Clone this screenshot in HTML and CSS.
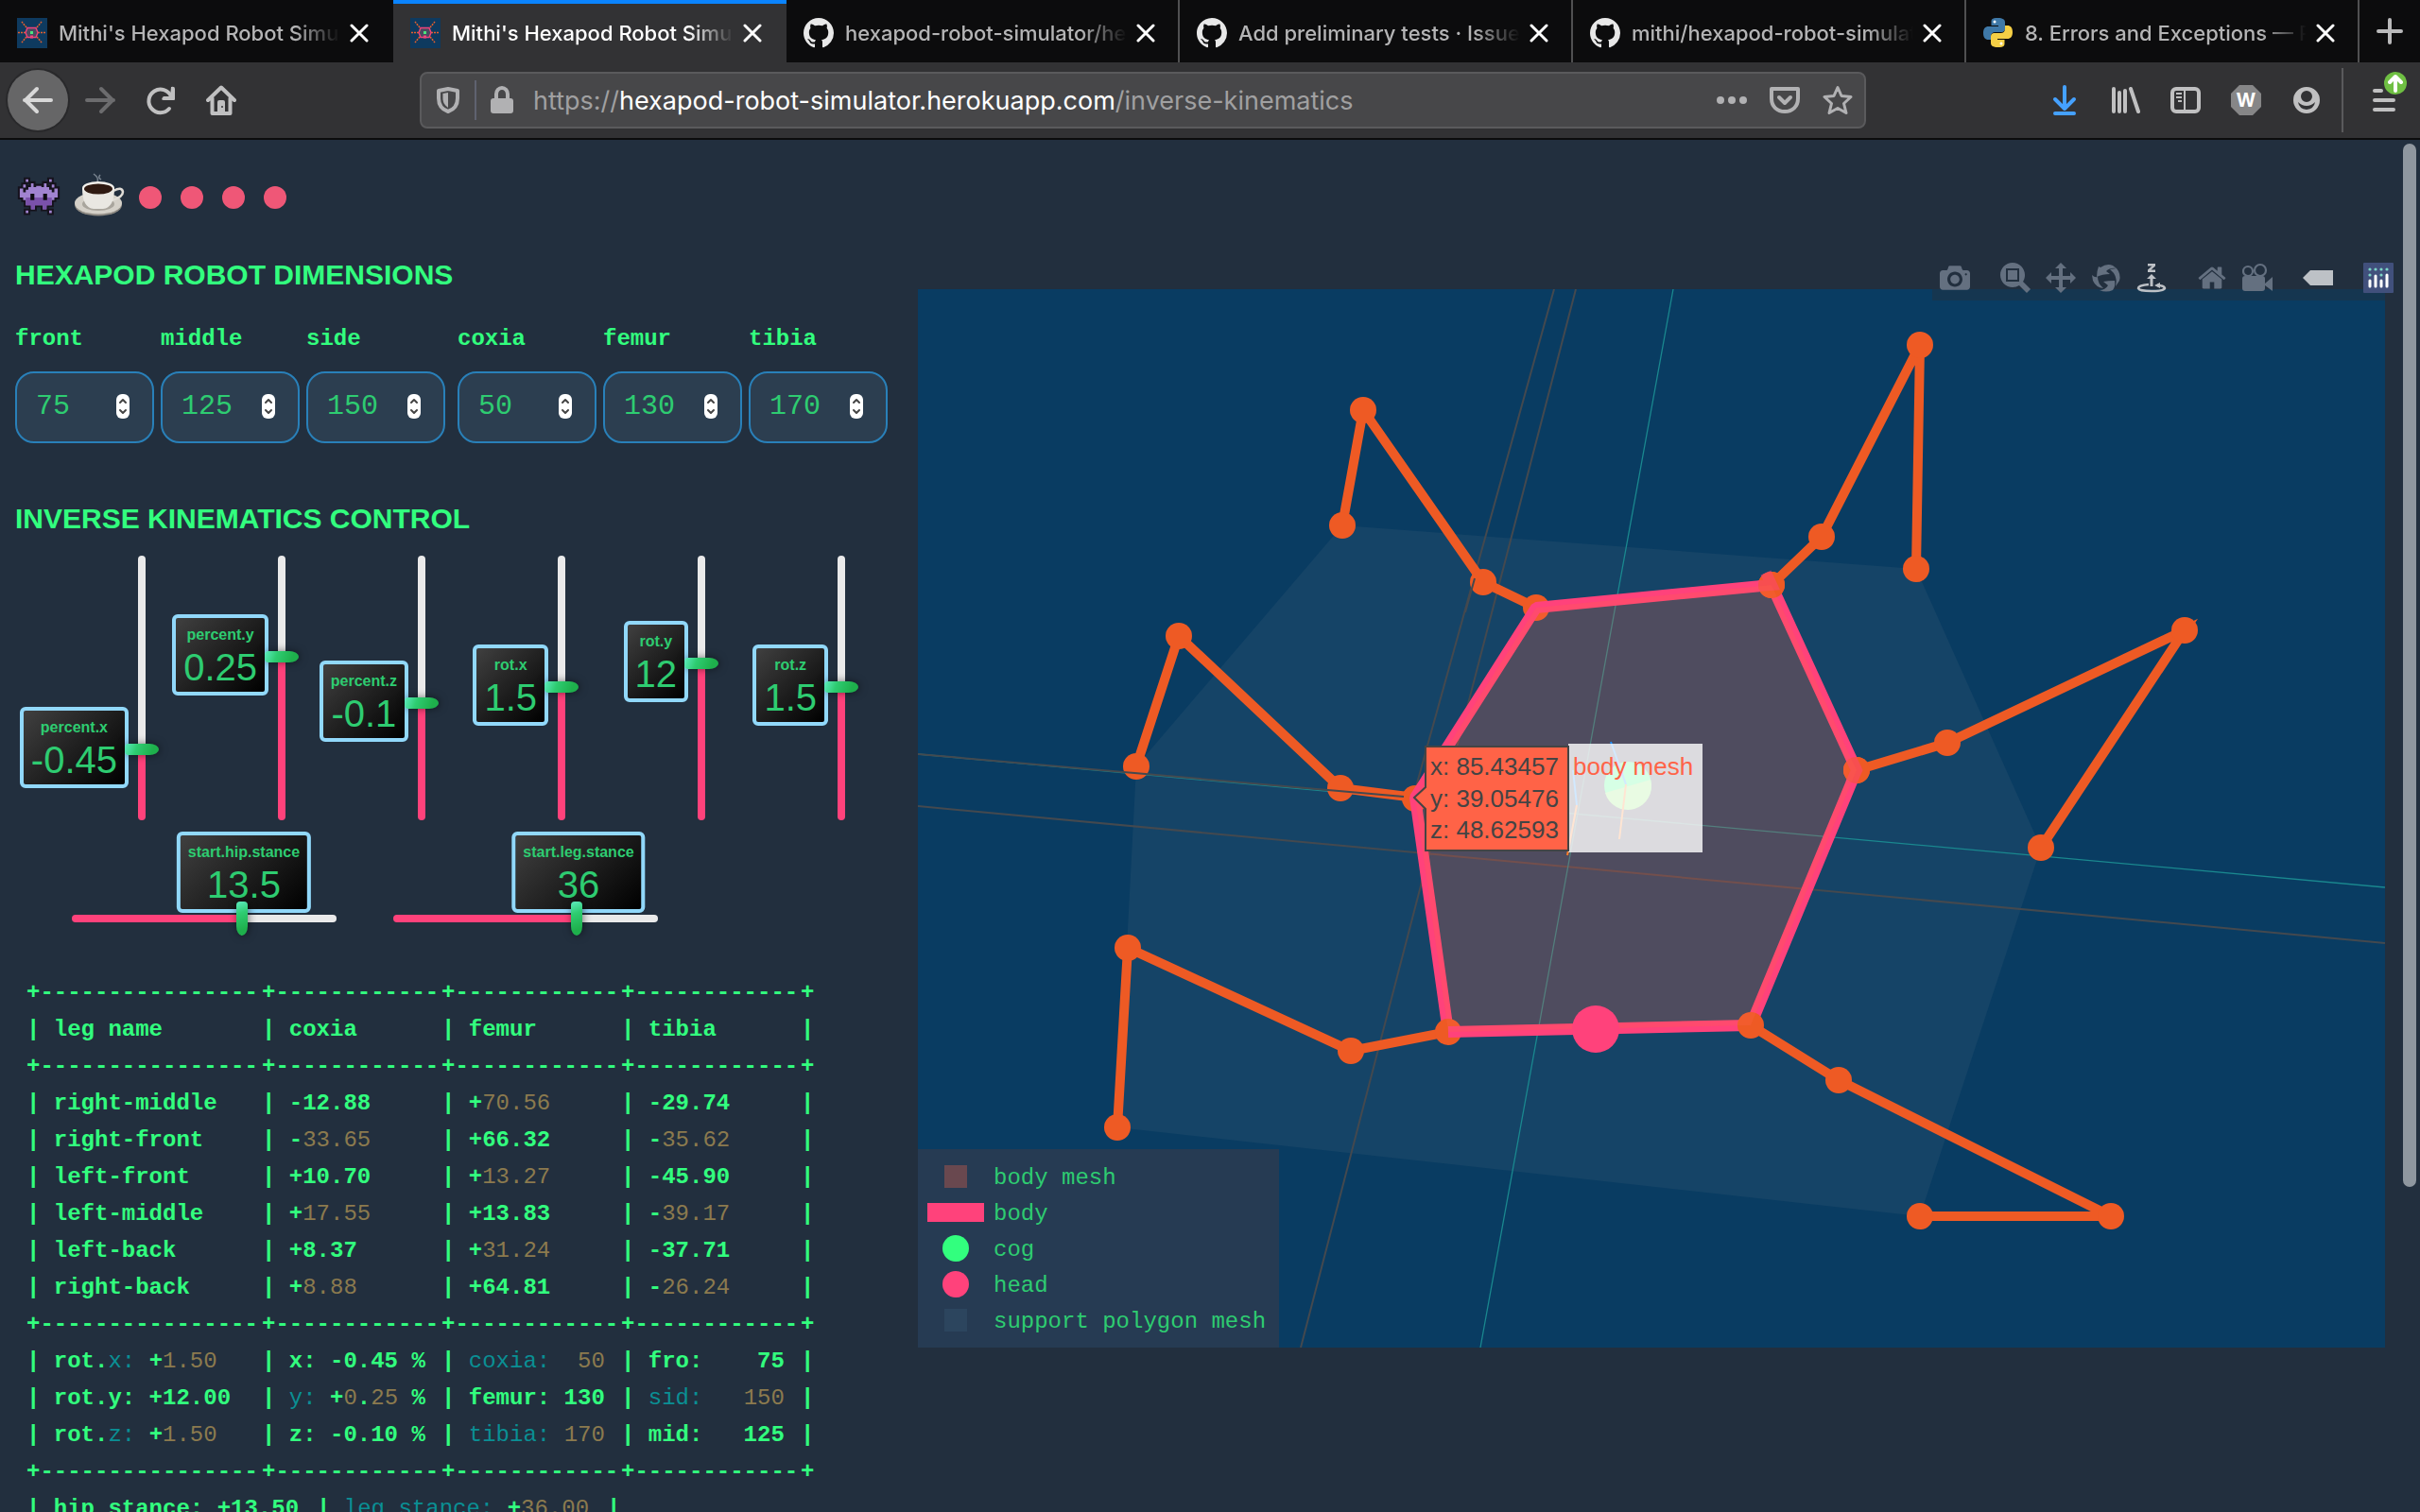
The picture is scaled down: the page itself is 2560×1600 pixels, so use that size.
FILE: index.html
```html
<!DOCTYPE html>
<html lang="en">
<head>
<meta charset="utf-8">
<title>Mithi's Hexapod Robot Simulator</title>
<link rel="stylesheet" href="styles.css">
</head>
<body>
<svg class="defs" aria-hidden="true">
  <symbol id="hexapod" viewBox="0 0 32 32">
    <path fill="#0e3a5f" d="M0 0h32v32H0z"/>
    <path stroke="#e8602c" stroke-width="1.500" stroke-dasharray="2 1" fill="none" d="M10 10L5 4M21 10L26 4M10 20L5 26M21 20L26 26M9 15.500H1M22 15.500H31"/>
    <path stroke="#f0427c" stroke-width="1.400" fill="#4a4a60" d="M11 10.500h9l2 5-2 5h-9l-2-5z"/>
    <path fill="#4be37e" d="M14 14h3v3h-3z"/><path fill="#f0427c" d="M14 18.500h3v3h-3z"/>
  </symbol>
  <symbol id="github" viewBox="0 0 16 16"><path fill="#e8e8e8" d="M8 0C3.580 0 0 3.580 0 8c0 3.540 2.290 6.530 5.470 7.590.4.070.550-.170.550-.380 0-.190-.010-.820-.010-1.490-2.010.370-2.530-.490-2.690-.940-.090-.230-.480-.940-.820-1.130-.280-.150-.680-.520-.010-.530.630-.010 1.080.580 1.230.820.720 1.210 1.870.870 2.330.660.070-.520.280-.870.510-1.070-1.780-.2-3.640-.890-3.640-3.950 0-.870.310-1.590.820-2.150-.080-.2-.360-1.020.080-2.120 0 0 .670-.210 2.200.820.640-.180 1.320-.270 2-.270.680 0 1.360.090 2 .270 1.530-1.040 2.200-.820 2.200-.820.440 1.100.160 1.920.080 2.120.510.560.820 1.270.820 2.150 0 3.070-1.870 3.750-3.650 3.950.290.250.540.730.540 1.480 0 1.070-.010 1.930-.010 2.200 0 .210.150.460.550.380A8.013 8.013 0 0016 8c0-4.420-3.580-8-8-8z"/></symbol>
  <symbol id="python" viewBox="0 0 32 32">
    <path fill="#3f79a8" d="M15.500 0C8.500 0 8.500 2 8.500 4.500V8H16v1H5.500C2 9 0 11.500 0 16s2 7 5.500 7H8v-3.500c0-3 2-4.500 4.500-4.500h7c2 0 3.500-1.500 3.500-3.500v-7C23 1.500 20.500 0 15.500 0z"/>
    <path fill="#f5cf45" transform="rotate(180 15.500 15.500)" d="M15.500 0C8.500 0 8.500 2 8.500 4.500V8H16v1H5.500C2 9 0 11.500 0 16s2 7 5.500 7H8v-3.500c0-3 2-4.500 4.500-4.500h7c2 0 3.500-1.500 3.500-3.500v-7C23 1.500 20.500 0 15.500 0z"/>
    <circle cx="12" cy="4" r="1.500" fill="#fff"/><circle cx="19" cy="27" r="1.500" fill="#fff"/>
  </symbol>
  <symbol id="close" viewBox="0 0 20 20"><path stroke="#fff" stroke-width="3" stroke-linecap="round" d="M2 2L18 18M18 2L2 18"/></symbol>
  <symbol id="spin" viewBox="0 0 14 26">
    <rect width="14" height="26" rx="6" fill="#fff"/>
    <path fill="none" stroke="#444" stroke-width="2" stroke-linecap="round" stroke-linejoin="round" d="M4 9l3-3 3 3M4 17l3 3 3-3"/>
  </symbol>
</svg>

<nav class="tabs" aria-label="Tabs">
  <a class="tab" href="#t1"><svg class="favicon"><use href="#hexapod"/></svg><span class="tab-title">Mithi's Hexapod Robot Simulator</span><svg class="tab-close"><use href="#close"/></svg></a>
  <a class="tab active" href="#t2"><svg class="favicon"><use href="#hexapod"/></svg><span class="tab-title">Mithi's Hexapod Robot Simulator</span><svg class="tab-close"><use href="#close"/></svg></a>
  <a class="tab ruled" href="#t3"><svg class="favicon"><use href="#github"/></svg><span class="tab-title">hexapod-robot-simulator/hexapod</span><svg class="tab-close"><use href="#close"/></svg></a>
  <a class="tab ruled" href="#t4"><svg class="favicon"><use href="#github"/></svg><span class="tab-title">Add preliminary tests · Issue #12</span><svg class="tab-close"><use href="#close"/></svg></a>
  <a class="tab ruled" href="#t5"><svg class="favicon"><use href="#github"/></svg><span class="tab-title">mithi/hexapod-robot-simulator</span><svg class="tab-close"><use href="#close"/></svg></a>
  <a class="tab ruled" href="#t6"><svg class="favicon"><use href="#python"/></svg><span class="tab-title">8. Errors and Exceptions — Python</span><svg class="tab-close"><use href="#close"/></svg></a>
  <button class="new-tab" aria-label="New tab"><svg width="28" height="28" viewBox="0 0 28 28"><path stroke="#b9b9ba" stroke-width="4" stroke-linecap="round" d="M14 2V26M2 14H26"/></svg></button>
</nav>

<header class="toolbar">
  <button class="tool back" aria-label="Back"><svg width="32" height="32" viewBox="0 0 32 32"><path class="line" d="M2 16H30M15 4L3 16L15 28"/></svg></button>
  <button class="tool faded" aria-label="Forward"><svg width="32" height="32" viewBox="0 0 32 32"><path class="line" d="M2 16H30M17 4L29 16L17 28"/></svg></button>
  <button class="tool" aria-label="Reload"><svg width="32" height="32" viewBox="0 0 32 32"><path class="line" d="M25 25A12.300 12.300 0 1 1 27 12"/><path fill="currentColor" d="M27 2q4-1 4 2V15q0 1-1 1H19q-3 0-1-3l1-1h7z"/></svg></button>
  <button class="tool" aria-label="Home"><svg width="32" height="32" viewBox="0 0 32 32"><path class="line" d="M2 16L16 2.500L30 16M6.500 14V30H25.500V14"/><path fill="currentColor" d="M12 30V18q0-2 2-2h4q2 0 2 2V30z"/><circle cx="17" cy="23" r="1" fill="#323234"/></svg></button>
  <div class="urlbar">
    <svg class="shield" width="28" height="30" viewBox="0 0 28 30"><path class="line" d="M4 5L14 3L24 5V13C24 20 20 25 14 27C8 25 4 20 4 13z"/><path fill="currentColor" d="M8.500 8L14 7V23C10 20 8.500 17 8.500 13z"/></svg>
    <span class="url-rule"></span>
    <svg class="lock" width="26" height="30" viewBox="0 0 26 30"><path fill="none" stroke="currentColor" stroke-width="4" d="M7 14V8.500a6 6.500 0 0 1 12 0V14"/><rect x="1" y="13" width="24" height="16" rx="3" fill="currentColor"/></svg>
    <span class="url">https://<b>hexapod-robot-simulator.herokuapp.com</b>/inverse-kinematics</span>
    <button class="mini" aria-label="Page actions"><svg width="32" height="32" viewBox="0 0 32 32"><g fill="currentColor"><circle cx="4" cy="16" r="4"/><circle cx="16" cy="16" r="4"/><circle cx="28" cy="16" r="4"/></g></svg></button>
    <button class="mini" aria-label="Save to Pocket"><svg width="32" height="32" viewBox="0 0 32 32"><path class="line" d="M2 4H30V14C30 23 24 28 16 28C8 28 2 23 2 14z"/><path class="line" d="M10 13L16 19L22 13"/></svg></button>
    <button class="mini" aria-label="Bookmark"><svg width="32" height="32" viewBox="0 0 32 32"><path class="line thin" d="M16 2.500L20 11.500L30 12.500L22.500 19.500L25 29.500L16 24.500L7 29.500L9.500 19.500L2 12.500L12 11.500z"/></svg></button>
  </div>
  <button class="tool download" aria-label="Downloads"><svg width="32" height="32" viewBox="0 0 32 32"><path class="line" d="M16 2V24M6 15L16 25L26 15M6 30H26"/></svg></button>
  <button class="tool" aria-label="Library"><svg width="32" height="32" viewBox="0 0 32 32"><path class="line" d="M4 4V28M10 8V28M16 6V28M22 4L30 28"/></svg></button>
  <button class="tool" aria-label="Sidebars"><svg width="32" height="32" viewBox="0 0 32 32"><rect class="line" x="2" y="4" width="28" height="24" rx="4"/><path fill="none" stroke="currentColor" stroke-width="2" d="M15 4V28M6 9H12M6 13H12M8 17H12"/></svg></button>
  <button class="tool" aria-label="W extension"><svg width="32" height="32" viewBox="0 0 32 32"><path fill="#868687" d="M9 0H23L32 9V23L23 32H9L0 23V9z"/><text class="w" x="16" y="23" text-anchor="middle">W</text></svg></button>
  <button class="tool" aria-label="Account"><svg width="32" height="32" viewBox="0 0 32 32"><path fill="currentColor" fill-rule="evenodd" d="M16 2a14 14 0 1 0 0 28a14 14 0 1 0 0-28zM16 6a6 6 0 1 1 0 12a6 6 0 1 1 0-12zM7 18q4 4 9 4t9-4q-1 7-9 8q-8-1-9-8z"/></svg></button>
  <span class="tool-rule"></span>
  <button class="tool menu" aria-label="Menu"><svg width="48" height="64" viewBox="0 0 48 64"><path class="line" d="M14 22H21M14 32H34M14 42H34"/><circle cx="36" cy="14" r="12" fill="#6fbf43"/><path fill="none" stroke="#fff" stroke-width="4" stroke-linecap="round" stroke-linejoin="round" d="M36 22V8M30 13L36 7L42 13"/></svg></button>
</header>

<main class="page">
  <section class="controls">
    <div class="links">
      <svg class="alien" width="50" height="44" viewBox="-1 -1 18 16"><path fill="#a183d0" stroke="#15121c" stroke-width="1.500" paint-order="stroke" d="M3 0h1v1h-1zM12 0h1v1h-1zM5 1.500h1V3h1v-.500h2V3h1V1.500h1V3h1v1h1v1h1V3.500h1.300V7H14V8h-1v2h-2v1.500H9.500V10h-3v1.500H5V10H3V8H2V7H.700V3.500H2V5h1V4h1V3h1zM2 2h1v1.200H2zM13 2h1v1.200h-1zM3 12h1v1h-1zM12 12h1v1h-1z"/><path fill="#7a51aa" d="M3 7h10v3h-2v1.500H9.500V10h-3v1.500H5V10H3z"/><path fill="#0e0c12" d="M4.800 5.500h1.500V8H4.800zM9.700 5.500h1.500V8H9.700z"/></svg>
      <svg class="cup" width="54" height="48" viewBox="0 0 54 48">
        <path fill="none" stroke="#77828e" stroke-width="1.500" d="M21 1q6 4 4 9M28 2q-3 3 1 5"/>
        <ellipse cx="26" cy="34" rx="25" ry="11.500" fill="#8f8b84"/><ellipse cx="26" cy="32" rx="25" ry="11.500" fill="#d4d0c8"/><ellipse cx="26" cy="33" rx="17" ry="7" fill="#a9a59d"/>
        <path fill="none" stroke="#e0ddd7" stroke-width="2.500" d="M42 19q9-5 10 1q0 6-12 9"/>
        <path fill="#e9e7e2" d="M9 16q0 21 12 22h10q12-1 12-22z"/><ellipse cx="26" cy="16" rx="17" ry="7" fill="#f3f1ec"/><ellipse cx="26" cy="17" rx="15" ry="5.500" fill="#2f1a12"/>
      </svg>
      <a class="dot" href="#a" aria-label="Page 1"></a><a class="dot" href="#b" aria-label="Page 2"></a><a class="dot" href="#c" aria-label="Page 3"></a><a class="dot" href="#d" aria-label="Page 4"></a>
    </div>

    <h2>HEXAPOD ROBOT DIMENSIONS</h2>
    <div class="dimensions">
      <div class="trio">
        <label class="dim">front<span class="box"><input type="number" value="75"><svg class="spin"><use href="#spin"/></svg></span></label>
        <label class="dim">middle<span class="box"><input type="number" value="125"><svg class="spin"><use href="#spin"/></svg></span></label>
        <label class="dim">side<span class="box"><input type="number" value="150"><svg class="spin"><use href="#spin"/></svg></span></label>
      </div>
      <div class="trio">
        <label class="dim">coxia<span class="box"><input type="number" value="50"><svg class="spin"><use href="#spin"/></svg></span></label>
        <label class="dim">femur<span class="box"><input type="number" value="130"><svg class="spin"><use href="#spin"/></svg></span></label>
        <label class="dim">tibia<span class="box"><input type="number" value="170"><svg class="spin"><use href="#spin"/></svg></span></label>
      </div>
    </div>

    <h2>INVERSE KINEMATICS CONTROL</h2>
    <div class="sliders">
      <div class="vertical" style="--p:27.5%"><label class="bubble" for="px">percent.x<output>-0.45</output></label><input id="px" type="range" min="-1" max="1" step="0.01" value="-0.45"></div>
      <div class="vertical" style="--p:62.5%"><label class="bubble" for="py">percent.y<output>0.25</output></label><input id="py" type="range" min="-1" max="1" step="0.01" value="0.25"></div>
      <div class="vertical" style="--p:45%"><label class="bubble" for="pz">percent.z<output>-0.1</output></label><input id="pz" type="range" min="-1" max="1" step="0.01" value="-0.1"></div>
      <div class="vertical" style="--p:51.25%"><label class="bubble" for="rx">rot.x<output>1.5</output></label><input id="rx" type="range" min="-60" max="60" step="0.5" value="1.5"></div>
      <div class="vertical" style="--p:60%"><label class="bubble" for="ry">rot.y<output>12</output></label><input id="ry" type="range" min="-60" max="60" step="0.5" value="12"></div>
      <div class="vertical" style="--p:51.25%"><label class="bubble" for="rz">rot.z<output>1.5</output></label><input id="rz" type="range" min="-60" max="60" step="0.5" value="1.5"></div>
    </div>
    <div class="stances">
      <div class="horizontal" style="--p:65%"><label class="bubble" for="hip">start.hip.stance<output>13.5</output></label><input id="hip" type="range" min="-45" max="45" step="0.5" value="13.5"></div>
      <div class="horizontal" style="--p:70%"><label class="bubble" for="leg">start.leg.stance<output>36</output></label><input id="leg" type="range" min="-90" max="90" step="0.5" value="36"></div>
    </div>

    <table class="report">
      <colgroup><col class="wide"><col class="mid"><col class="mid"><col class="mid"><col class="edge"></colgroup>
      <tr><td>+----------------</td><td>+------------</td><td>+------------</td><td>+------------</td><td>+</td></tr>
      <tr><th>| leg name</th><th>| coxia</th><th>| femur</th><th>| tibia</th><th>|</th></tr>
      <tr><td>+----------------</td><td>+------------</td><td>+------------</td><td>+------------</td><td>+</td></tr>
      <tr><td>| right-middle</td><td>| -12.88</td><td>| +<i>70.56</i></td><td>| -29.74</td><td>|</td></tr>
      <tr><td>| right-front</td><td>| -<i>33.65</i></td><td>| +66.32</td><td>| -<i>35.62</i></td><td>|</td></tr>
      <tr><td>| left-front</td><td>| +10.70</td><td>| +<i>13.27</i></td><td>| -45.90</td><td>|</td></tr>
      <tr><td>| left-middle</td><td>| +<i>17.55</i></td><td>| +13.83</td><td>| -<i>39.17</i></td><td>|</td></tr>
      <tr><td>| left-back</td><td>| +8.37</td><td>| +<i>31.24</i></td><td>| -37.71</td><td>|</td></tr>
      <tr><td>| right-back</td><td>| +<i>8.88</i></td><td>| +64.81</td><td>| -<i>26.24</i></td><td>|</td></tr>
      <tr><td>+----------------</td><td>+------------</td><td>+------------</td><td>+------------</td><td>+</td></tr>
      <tr><td>| rot.<u>x:</u> +<i>1.50</i></td><td>| x: -0.45 %</td><td>| <u>coxia:</u>  <i>50</i></td><td>| fro:    75</td><td>|</td></tr>
      <tr><td>| rot.y: +12.00</td><td>| <u>y:</u> +<i>0</i>.<i>25</i> %</td><td>| femur: 130</td><td>| <u>sid:</u>   <i>150</i></td><td>|</td></tr>
      <tr><td>| rot.<u>z:</u> +<i>1.50</i></td><td>| z: -0.10 %</td><td>| <u>tibia:</u> <i>170</i></td><td>| mid:   125</td><td>|</td></tr>
      <tr><td>+----------------</td><td>+------------</td><td>+------------</td><td>+------------</td><td>+</td></tr>
      <tr><td colspan="5"><div class="stance-row"><span>| hip stance: +13.50</span><span>| <u>leg stance:</u> +<i>36.00</i></span>|</div></td></tr>
    </table>
  </section>

  <section class="plot" aria-label="Hexapod model">
    <svg class="scene" viewBox="971 306 1552 1120">
      <path fill="#093c62" d="M971 306h1552v1120H971z"/>
      <path fill="#154467" d="M1420 556L2027 602L2159 897L2031 1287L1182 1193L1202 811z"/>
      <g fill="none" stroke="#44494f" stroke-width="2">
        <path d="M1644 306L1497 836M1667 306L1376 1426M971 853L2523 998"/>
        <path stroke="#1a888f" stroke-width="1.300" d="M971 798L2523 939M1770 306L1566 1426"/>
      </g>
      <g class="legs">
        <path d="M1625 643L1569 616L1442 434L1420 556"/>
        <path d="M1497 844L1418 834L1247 673L1202 811"/>
        <path d="M1532 1092L1429 1112L1193 1003L1182 1193"/>
        <path d="M1874 619L1927 568L2031 365L2027 602"/>
        <path d="M1964 815L2060 786L2311 667L2159 897"/>
        <path d="M1852 1085L1945 1143L2233 1287L2031 1287"/>
      </g>
      <g fill="#ee5a24">
        <circle cx="1625" cy="643" r="14"/><circle cx="1569" cy="616" r="14"/><circle cx="1442" cy="434" r="14"/><circle cx="1420" cy="556" r="14"/>
        <circle cx="1497" cy="845" r="14"/><circle cx="1418" cy="834" r="14"/><circle cx="1247" cy="673" r="14"/><circle cx="1202" cy="811" r="14"/>
        <circle cx="1429" cy="1112" r="14"/><circle cx="1193" cy="1003" r="14"/><circle cx="1182" cy="1193" r="14"/>
        <circle cx="1874" cy="619" r="14"/><circle cx="1927" cy="568" r="14"/><circle cx="2031" cy="365" r="14"/><circle cx="2027" cy="602" r="14"/>
        <circle cx="1964" cy="815" r="14"/><circle cx="2060" cy="786" r="14"/><circle cx="2311" cy="667" r="14"/><circle cx="2159" cy="897" r="14"/>
        <circle cx="1945" cy="1143" r="14"/><circle cx="2233" cy="1287" r="14"/><circle cx="2031" cy="1287" r="14"/>
      </g>
      <path fill="none" stroke="#44494f" stroke-width="2" d="M971 798L1485 843M1560 612L1550 648"/>
      <path fill="none" stroke="#ff427b" stroke-width="12" stroke-linejoin="bevel" d="M1852 1085L1964 815L1874 619L1625 643L1497 844L1532 1092"/>
      <g fill="#ee5a24"><circle cx="1532" cy="1092" r="14"/><circle cx="1964" cy="815" r="14"/><circle cx="1874" cy="619" r="14"/></g>
      <path fill="none" stroke="#ff427b" stroke-width="12" d="M1532 1092L1852 1085"/>
      <path fill="none" stroke="#ff427b" stroke-width="12" d="M1958 829L1964 815L1958 802M1868 606L1874 619L1860 620" opacity=".5"/>
      <circle cx="1852" cy="1085" r="14" fill="#ee5a24"/>
      <path fill="#ff6347" fill-opacity=".25" d="M1532 1092L1852 1085L1964 815L1874 619L1625 643L1497 844z"/>
      <circle cx="1688" cy="1089" r="25" fill="#ff427b"/>
      <circle cx="1722" cy="831" r="25" fill="#32ff7e"/>
      <path fill="#8fe873" d="M1698 839L1746 825A25 25 0 0 1 1698 839z"/>
      <g fill="none" stroke-width="2"><path stroke="#1e90ff" d="M1704 785L1720 830M1664 815L1668 852"/><path stroke="#ff7f27" d="M1720 830L1713 888M1668 852L1658 905"/></g>
      <path fill="#fff" fill-opacity=".8" d="M1659 787h142v115h-142z"/>
      <path fill="#ff6347" stroke="#444" stroke-width="2" d="M1496 844L1508 833V790H1659V900H1508V856z"/>
      <g class="tip"><text x="1513" y="820">x: 85.43457</text><text x="1513" y="854">y: 39.05476</text><text x="1513" y="887">z: 48.62593</text><text class="tip-name" x="1664" y="820">body mesh</text></g>
    </svg>
    <ul class="legend">
      <li><span class="swatch"><span class="square warm"></span></span>body mesh</li>
      <li><span class="swatch"><span class="bar"></span></span>body</li>
      <li><span class="swatch"><span class="ball green"></span></span>cog</li>
      <li><span class="swatch"><span class="ball"></span></span>head</li>
      <li><span class="swatch"><span class="square cool"></span></span>support polygon mesh</li>
    </ul>
    <div class="modebar">
      <div class="group"><button aria-label="Download plot"><svg viewBox="0 0 1000 1000"><path transform="matrix(1 0 0 -1 0 850)" d="m500 450c-83 0-150-67-150-150 0-83 67-150 150-150 83 0 150 67 150 150 0 83-67 150-150 150z m400 150h-120c-16 0-34 13-39 29l-31 93c-6 15-23 28-40 28h-340c-16 0-34-13-39-28l-31-94c-6-15-23-28-40-28h-120c-55 0-100-45-100-100v-450c0-55 45-100 100-100h800c55 0 100 45 100 100v450c0 55-45 100-100 100z m-400-550c-138 0-250 112-250 250 0 138 112 250 250 250 138 0 250-112 250-250 0-138-112-250-250-250z m365 380c-19 0-35 16-35 35 0 19 16 35 35 35 19 0 35-16 35-35 0-19-16-35-35-35z"/></svg></button></div>
      <div class="group">
        <button aria-label="Zoom"><svg viewBox="0 0 1000 1000"><path transform="matrix(1 0 0 -1 0 850)" d="m1000-25l-250 251c40 63 63 138 63 218 0 224-182 406-407 406-224 0-406-182-406-406s183-406 407-406c80 0 155 22 218 62l250-250 125 125z m-812 250l0 438 437 0 0-438-437 0z m62 375l313 0 0-312-313 0 0 312z"/></svg></button>
        <button aria-label="Pan"><svg viewBox="0 0 1000 1000"><path transform="matrix(1 0 0 -1 0 850)" d="m1000 350l-187 188 0-125-250 0 0 250 125 0-188 187-187-187 125 0 0-250-250 0 0 125-188-188 186-187 0 125 252 0 0-250-125 0 187-188 188 188-125 0 0 250 250 0 0-126 187 188z"/></svg></button>
        <button aria-label="Orbital rotation"><svg viewBox="0 0 32 32"><path d="M10 5Q17 0 23 3L27 6Q20 5 16 9L20 12Q12 12 6 15Q6 9 8 4zM27 6Q32 12 30 19L26 25Q28 17 24 11L20 7zM1 13Q4 16 7 15Q7 22 13 27Q5 26 2 19zM13 20Q18 19 25 19Q26 25 23 29Q16 32 9 29Q15 29 18 24z"/></svg></button>
        <button class="on" aria-label="Turntable rotation"><svg viewBox="0 0 32 32"><path d="M12 1h8v2.500l-4.500 4H20V10h-8V7.500l4.500-4H12zM16 12l5 5h-3.500v8h-3v-8H11z"/><path fill="none" stroke="currentColor" stroke-width="2.500" d="M13 23Q2 24 2 27Q3 30 16 30Q29 30 30 27Q29 24 22 24"/><path d="M19 24l6-3v6z"/></svg></button>
      </div>
      <div class="group">
        <button aria-label="Reset camera"><svg viewBox="0 0 929 1000"><path transform="matrix(1 0 0 -1 0 850)" d="m786 296v-267q0-15-11-26t-25-10h-214v214h-143v-214h-214q-15 0-25 10t-11 26v267q0 1 0 2t0 2l321 264 321-264q1-1 1-4z m124 39l-34-41q-5-5-12-6h-2q-7 0-12 3l-386 322-386-322q-7-4-13-4-7 2-12 7l-35 41q-4 5-3 13t6 12l401 334q18 15 42 15t43-15l136-114v109q0 8 5 13t13 5h107q8 0 13-5t5-13v-227l122-102q5-5 6-12t-4-13z"/></svg></button>
        <button aria-label="Last saved camera"><svg viewBox="0 0 32 32"><rect y="14" width="24" height="16" rx="3"/><path d="M24 22L32 15V30L24 24z"/><g fill="none" stroke="currentColor" stroke-width="2.200"><circle cx="6" cy="9" r="5"/><circle cx="19" cy="8" r="6"/></g></svg></button>
      </div>
      <div class="group"><button class="on" aria-label="Show closest data"><svg viewBox="0 0 32 32"><path d="M0 16L8 8H32V24H8z"/></svg></button></div>
      <div class="group"><button aria-label="Plotly"><svg viewBox="0 0 32 32"><rect width="32" height="32" rx="1" fill="#41507c"/><g fill="none" stroke="#fff" stroke-width="3" stroke-linecap="round"><path d="M7 19V25M13 14V25M19 19V25M25 13V25"/></g><g fill="#7cd4c6"><circle cx="7" cy="7" r="1.600"/><circle cx="13" cy="7" r="1.600"/><circle cx="19" cy="7" r="1.600"/><circle cx="25" cy="7" r="1.600"/><circle cx="7" cy="13" r="1.600"/><circle cx="19" cy="13" r="1.600"/></g></svg></button></div>
    </div>
  </section>
  <div class="scrollbar"></div>
</main>
</body>
</html>
```
FILE: styles.css
```css
* { box-sizing: border-box; }
body {
  margin: 0;
  height: 100vh;
  display: flex;
  flex-direction: column;
  overflow: hidden;
  background: #222f3e;
  color: #32ff7e;
  font-family: "Liberation Sans", Arial, sans-serif;
}
button { border: 0; padding: 0; background: none; color: inherit; }
svg { display: block; flex: none; }
.defs { position: absolute; width: 0; height: 0; }

/* browser tabs */
.tabs { display: flex; height: 66px; flex: none; background: #0c0c0d; font: 500 22px/32px Inter, sans-serif; }
.tab {
  flex: 1;
  min-width: 0;
  display: flex;
  align-items: center;
  padding: 4px 26px 0 18px;
  color: #b4b4b5;
  text-decoration: none;
}
.tab.ruled { border-right: 2px solid #505051; padding-right: 24px; }
.tab.active { background: #323234; color: #fff; border-top: 4px solid #0a84ff; padding-top: 0; }
.favicon { width: 32px; height: 32px; margin-right: 12px; }
.tab-title {
  flex: 1;
  min-width: 0;
  overflow: hidden;
  white-space: nowrap;
  mask-image: linear-gradient(to left, transparent, #000 48px);
}
.tab-close { width: 20px; height: 20px; margin-left: 10px; }
.new-tab { width: 64px; flex: none; display: grid; place-items: center; }

/* navigation toolbar */
.toolbar {
  display: flex;
  align-items: center;
  flex: none;
  height: 82px;
  padding: 0 6px 0 8px;
  background: #323234;
  border-bottom: 2px solid #0c0c0d;
  color: #c0c0c1;
}
.tool { width: 64px; height: 64px; flex: none; display: grid; place-items: center; }
.line { fill: none; stroke: currentColor; stroke-width: 4px; stroke-linecap: round; stroke-linejoin: round; }
.line.thin { stroke-width: 3px; }
.back { background: #666667; border-radius: 50%; margin-right: 2px; color: #d8d8d8; box-shadow: 0 0 0 2px #29292b; }
.faded { color: #6c6c6e; }
.download { color: #45a1ff; }
.w { fill: #fff; font: bold 20px Inter, sans-serif; }
.urlbar {
  flex: 1;
  min-width: 0;
  height: 60px;
  margin: 0 178px;
  padding: 0 12px 0 14px;
  display: flex;
  align-items: center;
  border: 2px solid #5a5a5c;
  border-radius: 8px;
  background: #474749;
  color: #b1b1b3;
}
.url-rule { width: 2px; height: 42px; margin: 0 14px; background: #5f6270; }
.url { flex: 1; min-width: 0; margin-left: 20px; padding-top: 2px; overflow: hidden; white-space: nowrap; color: #a0a0a1; font: 400 27px/40px Inter, sans-serif; }
.url b { color: #fff; font-weight: 400; }
.mini { margin-left: 24px; }
.tool-rule { width: 2px; height: 68px; margin: 0 11px 0 5px; background: #5a5a5c; }

/* page */
.page {
  position: relative;
  flex: 1;
  min-height: 0;
  display: grid;
  grid-template-columns: 923px minmax(0, 1fr);
  align-items: start;
  gap: 32px;
  padding: 34px 37px 0 16px;
  overflow: hidden;
}
.scrollbar { position: absolute; top: 4px; right: 4px; width: 14px; height: 76%; border-radius: 7px; background: #8f979f; }
.links { display: flex; align-items: center; height: 54px; gap: 20px; }
.alien { margin-right: -8px; }
.cup { margin-right: -5px; margin-bottom: 4px; }
.dot { width: 24px; height: 24px; border-radius: 50%; background: #ef5777; }
h2 { margin: 35px 0 0; font-size: 30px; line-height: 40px; font-weight: 700; }

.dimensions { display: flex; justify-content: space-between; margin: 32px 0 60px; }
.dimensions + h2 { margin-top: 0; }
.trio { display: flex; gap: 7px; }
.dim { width: 147px; display: flex; flex-direction: column; gap: 18px; font: 700 24px/32px "Liberation Mono", monospace; }
.box { position: relative; display: block; }
.box input {
  display: block;
  width: 100%;
  height: 76px;
  padding: 0 24px 2px 20px;
  border: 2px solid #2980b9;
  border-radius: 20px;
  outline: 0;
  background: #2c3e50;
  color: #2ecc71;
  font: 400 30px/34px "Liberation Mono", monospace;
  appearance: textfield;
}
.box input::-webkit-inner-spin-button { display: none; }
.spin { position: absolute; right: 26px; top: 24px; width: 14px; height: 26px; }

/* sliders */
.sliders { display: flex; margin: 19px 0 0 60px; }
.vertical { position: relative; width: 148px; height: 280px; flex: none; }
.vertical::before, .horizontal::before { content: ""; position: absolute; border-radius: 4px; }
.vertical::before { left: 70px; width: 8px; height: 100%; background: linear-gradient(to top, #ff427b var(--p), #eaeaea var(--p)); }
.vertical input { position: absolute; left: 56px; top: -4px; width: 36px; height: 292px; writing-mode: vertical-lr; direction: rtl; }
input[type="range"] { appearance: none; margin: 0; background: none; }
input[type="range"]::-webkit-slider-thumb { appearance: none; box-shadow: 1px 0 8px rgba(0, 0, 0, .5); }
.vertical input::-webkit-slider-thumb { width: 36px; height: 12px; border-radius: 4px 10px 10px 4px / 4px 6px 6px 4px; background: linear-gradient(110deg, #5eebc0, #2ecc71 35%, #1eb04c 80%); }
.horizontal input::-webkit-slider-thumb { width: 12px; height: 36px; border-radius: 4px 4px 6px 6px / 4px 4px 10px 10px; background: linear-gradient(160deg, #5eebc0, #2ecc71 35%, #1eb04c 80%); }
.bubble {
  position: absolute;
  height: 86px;
  padding: 9px 8px 0;
  border: 4px solid #91d8fa;
  border-radius: 6px;
  background: linear-gradient(135deg, #404040, #000);
  color: #2ecc71;
  text-align: center;
  white-space: nowrap;
  font: 700 16px/18px "Liberation Sans", Arial, sans-serif;
}
.bubble output { display: block; font-size: 40px; line-height: 46px; font-weight: 400; margin-top: 2px; }
.vertical .bubble { right: 88px; bottom: var(--p); transform: translateY(50%); }
.stances { display: flex; gap: 60px; margin: 12px 0 0 60px; }
.horizontal { position: relative; width: 280px; height: 96px; }
.horizontal::before { left: 0; bottom: 0; width: 100%; height: 8px; background: linear-gradient(to right, #ff427b var(--p), #eaeaea var(--p)); }
.horizontal input { position: absolute; left: -8px; bottom: -14px; width: 292px; height: 36px; }
.horizontal .bubble { left: var(--p); top: 0; transform: translateX(-50%); }

/* text report */
.report { margin: 55px 0 0 12px; table-layout: fixed; width: 835px; border-collapse: collapse; font: 700 24px/39px "Liberation Mono", monospace; }
.report td, .report th { padding: 0; height: 39px; text-align: left; white-space: pre; }
.wide { width: 249px; }
.mid { width: 190px; }
.stance-row { display: flex; }
.stance-row span { width: 307px; }
.report i { color: #8b7a4e; font-style: normal; font-weight: 400; }
.report u { color: #0a8f94; text-decoration: none; font-weight: 400; }

/* plot */
.plot { position: relative; margin-top: 124px; }
.scene { width: 100%; }
.legs { fill: none; stroke: #ee5a24; stroke-width: 10px; }
.tip { fill: #444; font: 26px "Liberation Sans", Arial, sans-serif; }
.tip-name { fill: #ff6347; }
.legend {
  position: absolute;
  left: 0;
  bottom: 0;
  margin: 0;
  padding: 10px 14px 10px 10px;
  list-style: none;
  background: #263b53;
  color: #2ecc71;
  font: 24px/42px "Liberation Mono", monospace;
}
.legend li { display: flex; gap: 10px; height: 38px; }
.swatch { width: 60px; height: 38px; display: grid; place-items: center; }
.square { width: 24px; height: 24px; }
.warm { background: #69484f; }
.cool { background: #2c455e; }
.bar { width: 60px; height: 20px; background: #ff427b; }
.ball { width: 28px; height: 28px; border-radius: 50%; background: #ff427b; }
.green { background: #32ff7e; }
.modebar { position: absolute; top: -36px; right: -17px; display: flex; background: rgba(34, 47, 62, .5); color: #647080; }
.group { display: flex; padding-left: 16px; }
.group:first-child { padding-left: 0; }
.modebar button { padding: 8px; }
.modebar svg { width: 32px; height: 32px; fill: currentColor; }
.modebar .on { color: #bdc1c6; }
```
